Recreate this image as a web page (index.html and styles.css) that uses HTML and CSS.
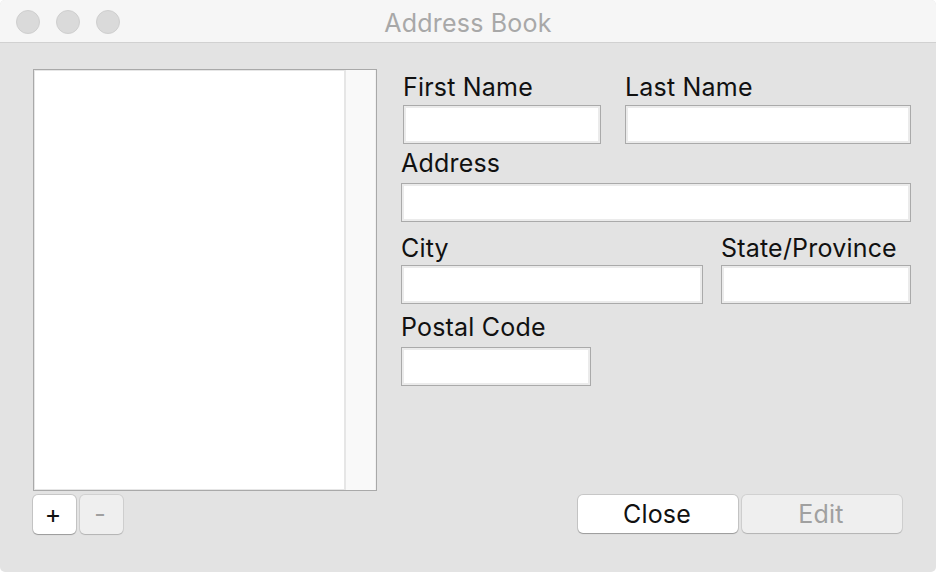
FILE: index.html
```html
<!DOCTYPE html>
<html lang="en">
<head>
<meta charset="utf-8">
<title>Address Book</title>
<link rel="stylesheet" href="styles.css">
</head>
<body>
<div class="window">
  <header class="titlebar">
    <div class="lights">
      <span class="light"></span>
      <span class="light"></span>
      <span class="light"></span>
    </div>
    <div class="title">Address Book</div>
  </header>
  <main class="content">
    <section class="left">
      <div class="listbox">
        <div class="list-items"></div>
        <div class="scrollbar"></div>
      </div>
      <div class="list-buttons">
        <button class="btn small">+</button>
        <button class="btn small disabled">-</button>
      </div>
    </section>
    <section class="right">
      <div class="form">
        <div class="row row1">
          <div class="field f-first">
            <label class="label">First Name</label>
            <div class="input"></div>
          </div>
          <div class="field f-last">
            <label class="label">Last Name</label>
            <div class="input"></div>
          </div>
        </div>
        <div class="row row2">
          <div class="field f-address">
            <label class="label">Address</label>
            <div class="input"></div>
          </div>
        </div>
        <div class="row row3">
          <div class="field f-city">
            <label class="label">City</label>
            <div class="input"></div>
          </div>
          <div class="field f-state">
            <label class="label">State/Province</label>
            <div class="input"></div>
          </div>
        </div>
        <div class="row row4">
          <div class="field f-postal">
            <label class="label">Postal Code</label>
            <div class="input"></div>
          </div>
        </div>
      </div>
      <div class="actions">
        <button class="btn wide">Close</button>
        <button class="btn wide disabled">Edit</button>
      </div>
    </section>
  </main>
</div>
</body>
</html>
```
FILE: styles.css
```css
* { box-sizing: border-box; }
html, body { margin: 0; padding: 0; background: #ffffff; }
body {
  width: 936px;
  height: 572px;
  overflow: hidden;
  font-family: "Inter", "Noto Sans", "Liberation Sans", sans-serif;
  color: #111;
}
.window {
  width: 936px;
  height: 572px;
  border-radius: 5px;
  overflow: hidden;
  background: #e3e3e3;
  display: flex;
  flex-direction: column;
}
.titlebar {
  height: 43px;
  flex: none;
  background: #f6f6f6;
  border-bottom: 1px solid #d1d1d1;
  display: flex;
  align-items: center;
  position: relative;
}
.lights {
  display: flex;
  gap: 16px;
  padding-left: 16px;
  padding-top: 1px;
}
.light {
  width: 24px;
  height: 24px;
  border-radius: 50%;
  background: #dadada;
  border: 1px solid #cfcfcf;
}
.title {
  position: absolute;
  left: 0;
  right: 0;
  top: 0;
  height: 42px;
  line-height: 46px;
  text-align: center;
  font-size: 25px;
  letter-spacing: 0.2px;
  color: #a8a8a8;
  pointer-events: none;
}
.content {
  flex: 1;
  display: flex;
  padding: 26px 25px 38px 33px;
  gap: 24px;
}
.left {
  width: 344px;
  display: flex;
  flex-direction: column;
}
.listbox {
  width: 344px;
  height: 422px;
  border: 1px solid #a9a9a9;
  background: #f9f9f9;
  display: flex;
}
.list-items {
  width: 312px;
  height: 100%;
  background: #ffffff;
  border: 1px solid #e6e6e6;
  border-right-width: 2px;
}
.scrollbar {
  flex: 1;
  background: #f9f9f9;
  border-right: 1px solid #f1f1f1;
}
.list-buttons {
  display: flex;
  gap: 4px;
  margin-top: 4px;
}
.btn {
  font-family: inherit;
  font-size: 25px;
  letter-spacing: 0.2px;
  color: #111;
  background: #ffffff;
  border: none;
  border-radius: 5px;
  box-shadow: 0 0 0 1px rgba(0,0,0,0.12), 0 1px 1px rgba(0,0,0,0.22);
  padding: 0;
  margin: 0;
}
.btn.small {
  width: 43px;
  height: 39px;
  line-height: 39px;
  padding-right: 3px;
}
.btn.wide {
  width: 160px;
  height: 38px;
  line-height: 38px;
  padding-right: 2px;
}
.btn.disabled {
  background: #efefef;
  color: #a0a0a0;
  box-shadow: 0 0 0 1px rgba(0,0,0,0.08), 0 1px 1px rgba(0,0,0,0.14);
}
.right {
  width: 510px;
  display: flex;
  flex-direction: column;
}
.form {
  display: flex;
  flex-direction: column;
}
.row {
  display: flex;
}
.field {
  display: flex;
  flex-direction: column;
}
.label {
  font-size: 25px;
  letter-spacing: 0.2px;
  line-height: 28px;
  height: 28px;
  white-space: nowrap;
}
.input {
  height: 39px;
  background: #ffffff;
  border: 1px solid #aaaaaa;
  box-shadow: inset 0 0 0 2px #ebebeb;
}
.row1 { margin-top: 4px; gap: 24px; padding-left: 2px; }
.row1 .label { margin-bottom: 4px; }
.f-first { width: 198px; }
.f-last { width: 286px; }
.row2 { margin-top: 5px; }
.row2 .label { margin-bottom: 6px; }
.f-address { width: 510px; }
.row3 { margin-top: 12px; gap: 18px; }
.row3 .label { margin-bottom: 3px; }
.f-city { width: 302px; }
.f-state { width: 190px; }
.row4 { margin-top: 9px; }
.row4 .label { margin-bottom: 6px; }
.f-postal { width: 190px; }
.actions {
  margin-top: auto;
  display: flex;
  justify-content: flex-end;
  gap: 4px;
  padding-right: 9px;
  padding-bottom: 1px;
}
```
